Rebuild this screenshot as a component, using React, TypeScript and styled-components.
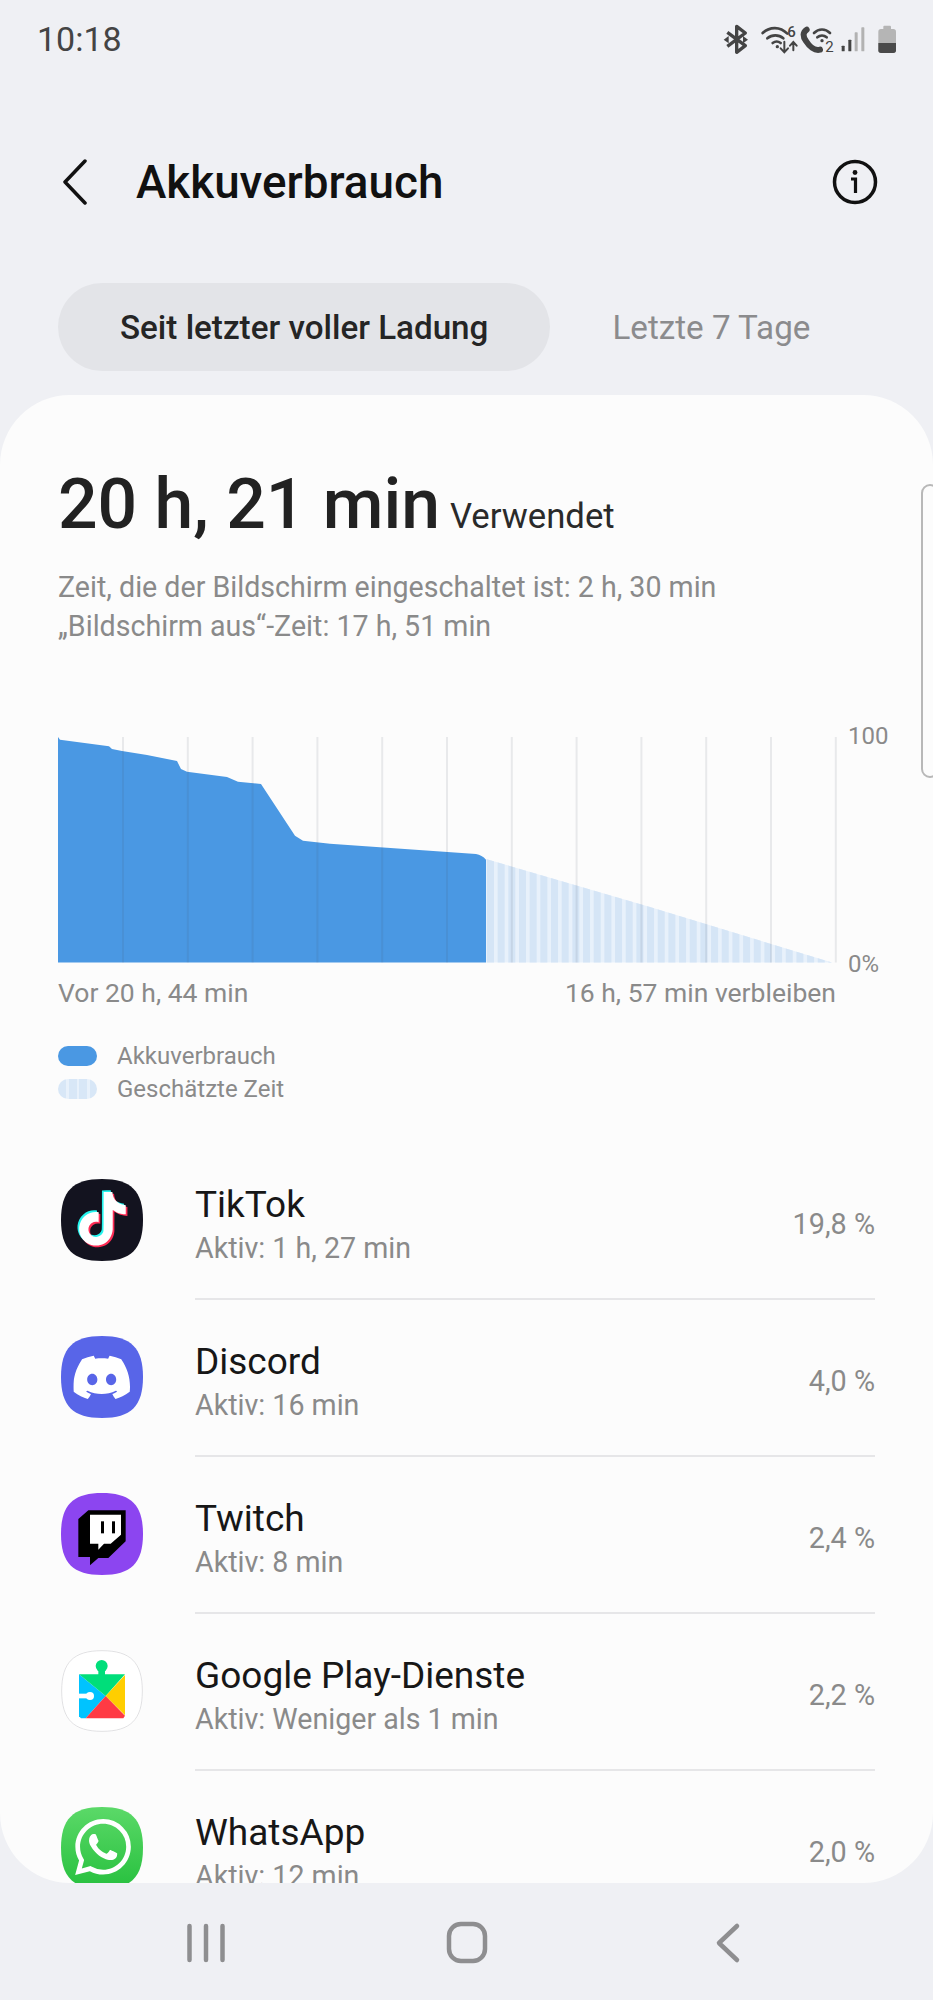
import React from "react";
import styled, { createGlobalStyle } from "styled-components";
import { SiDiscord, SiWhatsapp } from "react-icons/si";

const GlobalStyle = createGlobalStyle`
  html, body {
    margin: 0;
    padding: 0;
    background: #eff0f4;
    font-family: Roboto, "Liberation Sans", sans-serif;
  }
`;

const SQUIRCLE = "M123 0C210 0 246 36 246 123S210 246 123 246 0 210 0 123 36 0 123 0Z";
const TIKTOK =
  "M12.525.02c1.31-.02 2.61-.01 3.91-.02.08 1.53.63 3.09 1.75 4.17 1.12 1.11 2.7 1.62 4.24 1.79v4.03c-1.44-.05-2.89-.35-4.2-.97-.57-.26-1.1-.59-1.62-.93-.01 2.92.01 5.84-.02 8.75-.08 1.4-.54 2.79-1.35 3.94-1.31 1.92-3.58 3.17-5.91 3.21-1.43.08-2.86-.31-4.08-1.03-2.02-1.19-3.44-3.37-3.65-5.71-.02-.5-.03-1-.01-1.49.18-1.9 1.12-3.72 2.58-4.96 1.66-1.44 3.98-2.13 6.15-1.72.02 1.48-.04 2.96-.04 4.44-.99-.32-2.15-.23-3.02.37-.63.41-1.11 1.04-1.36 1.75-.21.51-.15 1.07-.14 1.61.24 1.64 1.82 3.02 3.5 2.87 1.12-.01 2.19-.66 2.77-1.61.19-.33.4-.67.41-1.06.1-1.79.06-3.57.07-5.36.01-4.03-.01-8.05.02-12.07z";

const IconSvg = styled.svg`
  width: 82px;
  height: 82px;
  display: block;
  flex: none;
`;

const TikTokIcon = () => (
  <IconSvg viewBox="0 0 246 246">
    <path d={SQUIRCLE} fill="#13131f" />
    <g transform="translate(39 34) scale(6.7)">
      <path d={TIKTOK} fill="#25f4ee" />
    </g>
    <g transform="translate(49 44) scale(6.7)">
      <path d={TIKTOK} fill="#fe2c55" />
    </g>
    <g transform="translate(44 39) scale(6.7)">
      <path d={TIKTOK} fill="#fff" />
    </g>
  </IconSvg>
);

const DiscordIcon = () => (
  <IconSvg viewBox="0 0 246 246">
    <path d={SQUIRCLE} fill="#5865e8" />
    <SiDiscord x={37} y={39} size={170} color="#fff" />
  </IconSvg>
);

const TwitchIcon = () => (
  <IconSvg viewBox="0 0 246 246">
    <path d={SQUIRCLE} fill="#8c45f0" />
    <g transform="translate(-63 -40)">
      <polygon points="145,92 257,92 257,185 205,235 175,235 150,257 150,232 115,232 115,118" fill="#000" />
      <polygon points="150,105 243,105 243,165 212,192 192,192 175,210 175,192 150,192" fill="#fff" />
      <rect x="183" y="125" width="9" height="36" fill="#000" />
      <rect x="216" y="125" width="9" height="36" fill="#000" />
    </g>
  </IconSvg>
);

const PlayServicesIcon = () => (
  <IconSvg viewBox="0 0 246 246">
    <path d={SQUIRCLE} fill="#fff" />
    <path d={SQUIRCLE} transform="translate(2 2) scale(.984)" fill="#fff" stroke="#e0e0e2" strokeWidth="3" />
    <g transform="translate(-63 -510)">
      <circle cx="185" cy="558" r="18" fill="#00de7a" />
      <rect x="175" y="565" width="20" height="22" fill="#00de7a" />
      <polygon points="117,583 197,648 137,715 123,715 117,709" fill="#00c3ff" />
      <polygon points="117,583 255,583 197,648" fill="#00de7a" />
      <polygon points="255,585 255,706 197,648" fill="#ffce00" />
      <polygon points="137,715 250,715 255,707 197,648" fill="#ff3a44" />
      <circle cx="150" cy="648" r="12" fill="#fff" />
      <rect x="117" y="641" width="28" height="14" fill="#fff" />
    </g>
  </IconSvg>
);

const WhatsAppIcon = () => (
  <IconSvg viewBox="0 0 246 246">
    <defs>
      <linearGradient id="wa" x1="0" y1="0" x2="0" y2="1">
        <stop offset="0" stopColor="#5bd968" />
        <stop offset="1" stopColor="#27c03e" />
      </linearGradient>
    </defs>
    <path d={SQUIRCLE} fill="url(#wa)" />
    <SiWhatsapp x={42} y={36} size={168} color="#fff" />
  </IconSvg>
);

const Page = styled.div`
  width: 933px;
  height: 2000px;
  overflow: hidden;
  display: flex;
  flex-direction: column;
  background: #eff0f4;
`;

const StatusBar = styled.div`
  height: 78px;
  padding: 0 33px 0 37px;
  display: flex;
  align-items: center;
  justify-content: space-between;
`;

const Clock = styled.span`
  font-size: 34px;
  color: #444;
`;

const StatusIcons = styled.svg`
  width: 180px;
  height: 40px;
`;

const Header = styled.div`
  height: 88px;
  margin-top: 60px;
  padding: 0 55px 0 61px;
  display: flex;
  align-items: center;
`;

const BackButton = styled.svg`
  width: 28px;
  height: 46px;
  flex: none;
`;

const Title = styled.h1`
  flex: 1;
  margin: 0 0 0 47px;
  font-size: 45.8px;
  font-weight: 500;
  color: #111;
`;

const InfoIcon = styled.svg`
  width: 46px;
  height: 46px;
`;

const Tabs = styled.div`
  margin-top: 57px;
  padding-left: 58px;
  display: flex;
`;

const Tab = styled.div<{ $active?: boolean }>`
  height: 88px;
  padding: 0 62px;
  border-radius: 44px;
  display: flex;
  align-items: center;
  font-size: 33.2px;
  font-weight: ${(p) => (p.$active ? 500 : 400)};
  color: ${(p) => (p.$active ? "#252525" : "#8b8b8d")};
  background: ${(p) => (p.$active ? "#e3e4e8" : "transparent")};
`;

const Card = styled.div`
  position: relative;
  margin-top: 24px;
  height: 1488px;
  flex: none;
  background: #fcfcfc;
  border-radius: 70px;
  overflow: hidden;
`;

const ScrollHandle = styled.div`
  position: absolute;
  top: 89px;
  right: -6px;
  width: 14px;
  height: 290px;
  border: 2px solid #b8b8b8;
  border-radius: 10px;
`;

const Summary = styled.section`
  padding: 69px 58px 0;
`;

const Headline = styled.div`
  height: 80px;
  display: flex;
  align-items: baseline;
  gap: 10px;
`;

const BigTime = styled.span`
  font-size: 69.7px;
  line-height: 80px;
  font-weight: 500;
  color: #222;
`;

const Used = styled.span`
  font-size: 34.7px;
  color: #2a2a2a;
`;

const SubLines = styled.div`
  margin-top: 24px;
  font-size: 28.6px;
  line-height: 39px;
  color: #8a8a8a;
`;

const ChartRow = styled.div`
  margin-top: 91px;
  height: 226px;
  display: flex;
`;

const ChartSvg = styled.svg`
  width: 780px;
  height: 226px;
  flex: none;
`;

const AxisLabels = styled.div`
  margin: -15px 0 -15px 10px;
  display: flex;
  flex-direction: column;
  justify-content: space-between;
  font-size: 24px;
  line-height: 28px;
  color: #8a8a8a;
`;

const ChartFooter = styled.div`
  width: 778px;
  margin-top: 13px;
  display: flex;
  justify-content: space-between;
  font-size: 26.5px;
  line-height: 34px;
  color: #8a8a8a;
`;

const Legend = styled.div`
  margin-top: 29px;
  display: flex;
  flex-direction: column;
`;

const LegendRow = styled.div`
  height: 33px;
  display: flex;
  align-items: center;
  gap: 20px;
  font-size: 24px;
  color: #8a8a8a;
`;

const Swatch = styled.span<{ $estimated?: boolean }>`
  width: 39px;
  height: 20px;
  border-radius: 10px;
  background: ${(p) =>
    p.$estimated
      ? "repeating-linear-gradient(90deg, #d8e7f7 0 8px, #e8f1fb 8px 10.5px)"
      : "#4a98e3"};
`;

const AppList = styled.ul`
  margin: 38px 58px 0 61px;
  padding: 0;
  list-style: none;
`;

const AppRow = styled.li`
  height: 157px;
  display: flex;
  gap: 52px;
`;

const IconSlot = styled.div`
  padding-top: 36px;
`;

const AppBody = styled.div`
  flex: 1;
  height: 157px;
  box-sizing: border-box;
  padding-top: 40px;
  display: flex;
  justify-content: space-between;
  border-bottom: 2px solid #e6e6e8;
`;

const AppName = styled.div`
  font-size: 37px;
  line-height: 44px;
  color: #171717;
`;

const AppMeta = styled.div`
  font-size: 28.6px;
  line-height: 42px;
  color: #8a8a8a;
`;

const Percent = styled.div`
  padding-top: 22px;
  font-size: 28.8px;
  line-height: 38px;
  color: #8a8a8a;
`;

const NavBar = styled.nav`
  flex: 1;
  padding-top: 3px;
  display: grid;
  grid-template-columns: repeat(3, 261px);
  justify-content: center;
  align-items: center;
  justify-items: center;
`;

const NavIcon = styled.svg`
  width: 48px;
  height: 44px;
`;

// chart coordinates: y 0 is the 100 line, y 225.5 the baseline
const USED_PATH =
  "M58 0 L60 2.7 L109 9.3 L112 12 L122 14 L147 18 L177 24 L181 32 L187 34.7 L227 40 L238 44.7 L261 47 L295 98.7 L303 103.7 L330 106.7 L476 117 Q482 118 486 122.7 L486 225.5 L58 225.5 Z";
const ESTIMATE_PATH = "M486 122 L650 170 L832 225.5 L486 225.5 Z";
const GRID_X = Array.from({ length: 12 }, (_, i) => 123 + i * 64.8);
const STRIPE_X = Array.from({ length: 33 }, (_, i) => 487 + i * 10.67);

const apps = [
  { name: "TikTok", meta: "Aktiv: 1 h, 27 min", pct: "19,8 %", Icon: TikTokIcon },
  { name: "Discord", meta: "Aktiv: 16 min", pct: "4,0 %", Icon: DiscordIcon },
  { name: "Twitch", meta: "Aktiv: 8 min", pct: "2,4 %", Icon: TwitchIcon },
  { name: "Google Play-Dienste", meta: "Aktiv: Weniger als 1 min", pct: "2,2 %", Icon: PlayServicesIcon },
  { name: "WhatsApp", meta: "Aktiv: 12 min", pct: "2,0 %", Icon: WhatsAppIcon },
];

const App = () => (
  <Page>
    <GlobalStyle />
    <StatusBar>
      <Clock>10:18</Clock>
      <StatusIcons viewBox="120 60 540 120">
        <g fill="none" stroke="#444" strokeWidth="10" strokeLinejoin="round">
          <path d="M142 100 L196 140 L170 160 L170 82 L196 102 L142 142" />
        </g>
        <polygon points="131,122 146,111 146,133" fill="#444" />
        <polygon points="204,122 189,111 189,133" fill="#444" />
        <g fill="none" stroke="#444" strokeWidth="8" strokeLinecap="round">
          <path d="M248 102 C270 82 300 82 322 104" />
          <path d="M262 118 C276 106 296 106 310 118" />
          <path d="M278 132 C286 126 294 126 302 132" />
          <path d="M313 128 V158 M302 148 L313 160 L324 148" strokeWidth="6" />
          <path d="M340 154 V130 M330 140 L340 129 L350 140" strokeWidth="6" />
          <path d="M402 102 C416 88 436 88 450 102" />
          <path d="M412 115 C420 108 432 108 440 115" />
        </g>
        <circle cx="292" cy="143" r="5" fill="#444" />
        <circle cx="426" cy="125" r="5" fill="#444" />
        <text x="322" y="113" fontSize="45" fontWeight="500" fill="#444" fontFamily="Roboto, sans-serif">6</text>
        <text x="436" y="158" fontSize="45" fill="#444" fontFamily="Roboto, sans-serif">2</text>
        <path d="M380 92 C368 100 368 112 378 126 C388 142 404 156 420 152" fill="none" stroke="#444" strokeWidth="18" strokeLinecap="round" />
        <rect x="485" y="140" width="9" height="17" rx="2" fill="#444" />
        <rect x="505" y="122" width="9" height="35" rx="2" fill="#444" />
        <rect x="524" y="100" width="9" height="57" rx="2" fill="#b2b2b2" />
        <rect x="544" y="85" width="9" height="72" rx="2" fill="#b2b2b2" />
        <rect x="610" y="80" width="23" height="16" rx="3" fill="#b5b5b5" />
        <rect x="595" y="90" width="53" height="72" rx="8" fill="#b5b5b5" />
        <path d="M595 132 H648 V154 Q648 162 640 162 H603 Q595 162 595 154 Z" fill="#4a4a4a" />
      </StatusIcons>
    </StatusBar>

    <Header>
      <BackButton viewBox="0 0 28 46">
        <path d="M24 2 L4 23 L24 44" fill="none" stroke="#111" strokeWidth="3.5" strokeLinecap="round" strokeLinejoin="round" />
      </BackButton>
      <Title>Akkuverbrauch</Title>
      <InfoIcon viewBox="0 0 46 46">
        <circle cx="23" cy="23" r="20.5" fill="none" stroke="#111" strokeWidth="3.5" />
        <circle cx="23" cy="13.5" r="2.4" fill="#111" />
        <path d="M19 20 H23.5 V34" fill="none" stroke="#111" strokeWidth="3.2" />
      </InfoIcon>
    </Header>

    <Tabs>
      <Tab $active>Seit letzter voller Ladung</Tab>
      <Tab>Letzte 7 Tage</Tab>
    </Tabs>

    <Card>
      <ScrollHandle />
      <Summary>
        <Headline>
          <BigTime>20 h, 21 min</BigTime>
          <Used>Verwendet</Used>
        </Headline>
        <SubLines>
          Zeit, die der Bildschirm eingeschaltet ist: 2 h, 30 min
          <br />
          „Bildschirm aus“-Zeit: 17 h, 51 min
        </SubLines>
        <ChartRow>
          <ChartSvg viewBox="58 0 780 226">
            <defs>
              <clipPath id="estimate">
                <path d={ESTIMATE_PATH} />
              </clipPath>
            </defs>
            <path d={ESTIMATE_PATH} fill="#e8f1fb" />
            <g clipPath="url(#estimate)">
              {STRIPE_X.map((x) => (
                <rect key={x} x={x} y="0" width="7" height="226" fill="#d5e5f6" />
              ))}
            </g>
            <path d={USED_PATH} fill="#4a98e3" />
            {GRID_X.map((x) => (
              <rect key={x} x={x - 1} y="0" width="2" height="225.5" fill="rgba(70,80,100,0.11)" />
            ))}
          </ChartSvg>
          <AxisLabels>
            <span>100</span>
            <span>0%</span>
          </AxisLabels>
        </ChartRow>
        <ChartFooter>
          <span>Vor 20 h, 44 min</span>
          <span>16 h, 57 min verbleiben</span>
        </ChartFooter>
        <Legend>
          <LegendRow>
            <Swatch />
            Akkuverbrauch
          </LegendRow>
          <LegendRow>
            <Swatch $estimated />
            Geschätzte Zeit
          </LegendRow>
        </Legend>
      </Summary>

      <AppList>
        {apps.map(({ name, meta, pct, Icon }) => (
          <AppRow key={name}>
            <IconSlot>
              <Icon />
            </IconSlot>
            <AppBody>
              <div>
                <AppName>{name}</AppName>
                <AppMeta>{meta}</AppMeta>
              </div>
              <Percent>{pct}</Percent>
            </AppBody>
          </AppRow>
        ))}
      </AppList>
    </Card>

    <NavBar>
      <NavIcon viewBox="0 0 48 44">
        <g stroke="#8e8e90" strokeWidth="4.5" strokeLinecap="round">
          <path d="M7.5 5 V39 M24 5 V39 M40.5 5 V39" />
        </g>
      </NavIcon>
      <NavIcon viewBox="0 0 48 44">
        <rect x="6" y="3" width="36" height="37" rx="12" fill="none" stroke="#8e8e90" strokeWidth="4.5" />
      </NavIcon>
      <NavIcon viewBox="0 0 48 44">
        <path d="M33 5 L15 22 L33 39" fill="none" stroke="#8e8e90" strokeWidth="4.5" strokeLinecap="round" strokeLinejoin="round" />
      </NavIcon>
    </NavBar>
  </Page>
);

export default App;
